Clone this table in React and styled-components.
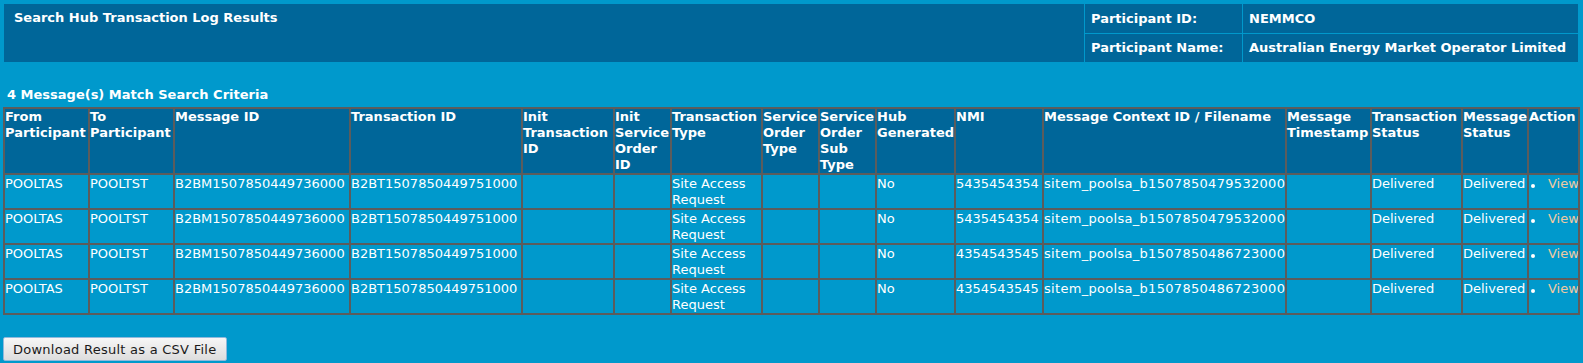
import React from "react";
import styled, { createGlobalStyle } from "styled-components";

const GlobalStyle = createGlobalStyle`
  html, body {
    margin: 0;
    padding: 0;
    background: #0099cc;
  }
  body {
    font-family: Verdana, "DejaVu Sans", sans-serif;
    font-size: 13px;
    color: #ffffff;
  }
`;

export const Page = styled.div`
  padding: 4px 3px 0 3px;
`;

export const Header = styled.div`
  display: grid;
  grid-template-columns: 1fr 157px 335px;
  grid-template-rows: 29px 28px;
  gap: 1px;
  background: #0099cc;
  margin: 0 2px 0 1px;
`;

export const HeaderTitle = styled.div`
  grid-row: 1 / span 2;
  background: #006699;
  font-weight: bold;
  line-height: 16px;
  padding: 6px 10px;
`;

export const HeaderCell = styled.div`
  background: #006699;
  font-weight: bold;
  line-height: 16px;
  padding: 0 6px;
  display: flex;
  align-items: center;
  white-space: nowrap;
`;

export const MatchCount = styled.div`
  font-weight: bold;
  line-height: 16px;
  margin: 25px 0 4px 4px;
`;

export const Table = styled.table`
  width: 1577px;
  table-layout: fixed;
  border-collapse: separate;
  border-spacing: 0;
  border: 1px solid #5c5c5c;
`;

export const Th = styled.th`
  background: #006699;
  border: 1px solid #5c5c5c;
  text-align: left;
  vertical-align: top;
  font-weight: bold;
  line-height: 16px;
  padding: 0;
`;

export const Td = styled.td`
  background: #0099cc;
  border: 1px solid #5c5c5c;
  vertical-align: top;
  line-height: 16px;
  padding: 1px 0 0 0;
  height: 32px;
  white-space: ${(p) => (p.$wrap ? "normal" : "nowrap")};
  letter-spacing: ${(p) => (p.$wide ? "0.3px" : "normal")};
  overflow: hidden;
`;

export const ActionCell = styled.div`
  display: flex;
  align-items: center;
  height: 16px;
  overflow: hidden;
`;

export const Bullet = styled.span`
  flex-shrink: 0;
  width: 4px;
  height: 4px;
  border-radius: 50%;
  background: #ffffff;
  margin: 3px 0 0 2px;
`;

export const ViewLink = styled.a`
  flex-shrink: 0;
  color: #f2c9a1;
  text-decoration: none;
  margin-left: 13px;
  cursor: pointer;
`;

export const Btn = styled.button`
  margin-top: 22px;
  width: 224px;
  height: 24px;
  padding: 0 9px;
  font-family: Verdana, "DejaVu Sans", sans-serif;
  font-size: 13px;
  letter-spacing: 0.25px;
  white-space: nowrap;
  color: #1a1a1a;
  text-align: left;
  background: linear-gradient(#f6f6f6, #dddddd);
  border: 1px solid #8fb9dc;
  border-radius: 2px;
  cursor: pointer;
`;

const widths = [85, 85, 176, 172, 92, 57, 91, 57, 57, 79, 88, 243, 85, 91, 66, 51];

const headings = [
  "From Participant",
  "To Participant",
  "Message ID",
  "Transaction ID",
  "Init Transaction ID",
  "Init Service Order ID",
  "Transaction Type",
  "Service Order Type",
  "Service Order Sub Type",
  "Hub Generated",
  "NMI",
  "Message Context ID / Filename",
  "Message Timestamp",
  "Transaction Status",
  "Message Status",
  "Action",
];

const rows = [
  { nmi: "5435454354", file: "sitem_poolsa_b1507850479532000" },
  { nmi: "5435454354", file: "sitem_poolsa_b1507850479532000" },
  { nmi: "4354543545", file: "sitem_poolsa_b1507850486723000" },
  { nmi: "4354543545", file: "sitem_poolsa_b1507850486723000" },
];

export default function App() {
  return (
    <Page>
      <GlobalStyle />
      <Header>
        <HeaderTitle>Search Hub Transaction Log Results</HeaderTitle>
        <HeaderCell>Participant ID:</HeaderCell>
        <HeaderCell>NEMMCO</HeaderCell>
        <HeaderCell>Participant Name:</HeaderCell>
        <HeaderCell>Australian Energy Market Operator Limited</HeaderCell>
      </Header>

      <MatchCount>4 Message(s) Match Search Criteria</MatchCount>

      <Table>
        <colgroup>
          {widths.map((w, i) => (
            <col key={i} style={{ width: w }} />
          ))}
        </colgroup>
        <thead>
          <tr>
            {headings.map((h) => (
              <Th key={h}>{h}</Th>
            ))}
          </tr>
        </thead>
        <tbody>
          {rows.map((r, i) => (
            <tr key={i}>
              <Td>POOLTAS</Td>
              <Td>POOLTST</Td>
              <Td>B2BM1507850449736000</Td>
              <Td>B2BT1507850449751000</Td>
              <Td></Td>
              <Td></Td>
              <Td $wrap>Site Access Request</Td>
              <Td></Td>
              <Td></Td>
              <Td>No</Td>
              <Td>{r.nmi}</Td>
              <Td $wide>{r.file}</Td>
              <Td></Td>
              <Td>Delivered</Td>
              <Td>Delivered</Td>
              <Td>
                <ActionCell>
                  <Bullet />
                  <ViewLink>View</ViewLink>
                </ActionCell>
              </Td>
            </tr>
          ))}
        </tbody>
      </Table>

      <Btn>Download Result as a CSV File</Btn>
    </Page>
  );
}
